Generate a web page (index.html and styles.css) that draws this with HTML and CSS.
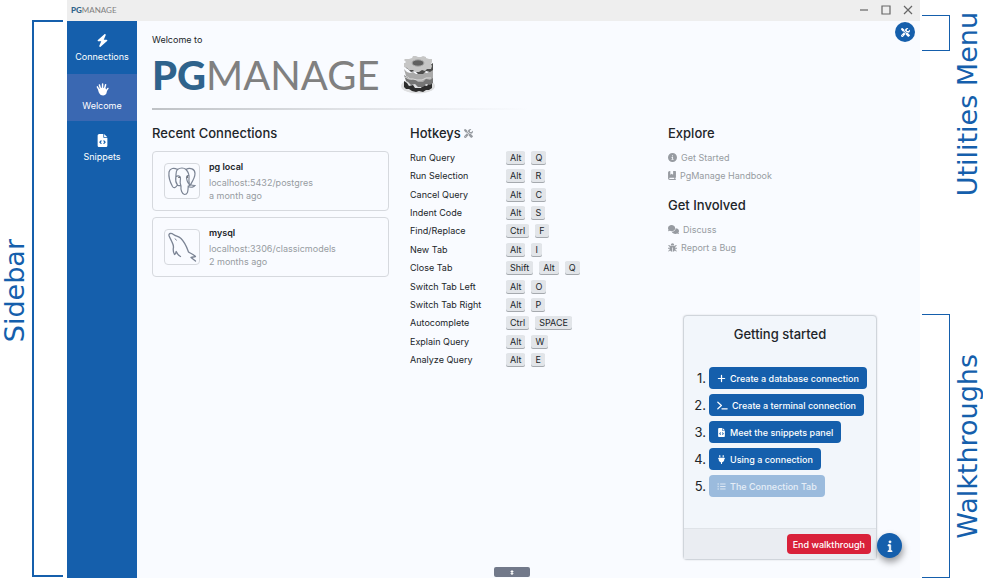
FILE: index.html
```html
<!DOCTYPE html>
<html lang="en">
<head>
<meta charset="utf-8">
<title>PgManage</title>
<link rel="stylesheet" href="styles.css">
</head>
<body>
<svg class="defs" aria-hidden="true">
  <symbol id="bolt" viewBox="0 0 448 512"><path d="M349.4 44.6c5.9-13.7 1.5-29.7-10.6-38.5s-28.6-8-39.9 1.8l-256 224c-10 8.8-13.6 22.9-8.9 35.3S50.7 288 64 288H175.5L98.6 467.4c-5.9 13.7-1.5 29.7 10.6 38.5s28.6 8 39.9-1.8l256-224c10-8.8 13.6-22.9 8.9-35.3s-16.6-20.7-30-20.7H272.5L349.4 44.6z"/></symbol>
  <symbol id="hand" viewBox="0 0 24 24"><path d="M6 13.500 L2.500 7 M8.500 11 L6.300 3.600 M12 10 L12.200 2 M15.500 11 L17.700 3.200 M18.500 15 L22 10" fill="none" stroke="currentColor" stroke-width="2.700" stroke-linecap="round"/><path d="M4.600 12 L10 8.600 L17 9 L19.800 13 C20.400 19 18 23 13.400 23 C9 23 7 21 4.600 16z"/></symbol>
  <symbol id="file" viewBox="0 0 384 512"><path d="M64 0C28.7 0 0 28.7 0 64V448c0 35.3 28.7 64 64 64H320c35.3 0 64-28.7 64-64V160H256c-17.7 0-32-14.3-32-32V0H64zM256 0V128H384L256 0zM153 289l-31 31 31 31c9.400 9.400 9.400 24.600 0 33.900s-24.600 9.400-33.900 0L71 337c-9.400-9.400-9.400-24.600 0-33.900l48-48c9.400-9.400 24.600-9.400 33.900 0s9.400 24.600 0 33.900zM265 255l48 48c9.400 9.400 9.400 24.600 0 33.900l-48 48c-9.400 9.400-24.600 9.400-33.900 0s-9.400-24.600 0-33.900l31-31-31-31c-9.400-9.400-9.400-24.600 0-33.900s24.600-9.400 33.900 0z"/></symbol>
  <symbol id="tools" viewBox="0 0 512 512"><path d="M78.6 5C69.100-2.400 55.600-1.500 47 7L7 47c-8.500 8.500-9.400 22-2.100 31.600l80 104c4.500 5.900 11.600 9.400 19 9.400h54.100l109 109c-14.700 29-10 65.400 14.300 89.600l112 112c12.500 12.500 32.800 12.500 45.300 0l64-64c12.500-12.500 12.500-32.800 0-45.300l-112-112c-24.200-24.200-60.600-29-89.600-14.300l-109-109V104c0-7.500-3.500-14.500-9.400-19L78.600 5zM19.900 396.100C7.200 408.800 0 426.100 0 444.100C0 481.600 30.400 512 67.900 512c18 0 35.300-7.200 48-19.900L233.700 374.300c-7.800-20.900-9-43.600-3.600-65.100l-61.700-61.700L19.900 396.100zM512 144c0-10.500-1.100-20.700-3.200-30.500c-2.400-11.200-16.100-14.100-24.200-6l-63.900 63.900c-3 3-7.100 4.700-11.300 4.700H352c-8.800 0-16-7.200-16-16V102.600c0-4.200 1.700-8.300 4.700-11.300l63.900-63.900c8.100-8.100 5.200-21.800-6-24.200C388.700 1.100 378.500 0 368 0C288.500 0 224 64.500 224 144l0 .8 85.300 85.300c36-9.100 75.800 .5 104 28.700L429 274.500c49-23 83-72.800 83-130.500zM56 432a24 24 0 1 1 48 0 24 24 0 1 1 -48 0z"/></symbol>
  <symbol id="circle-info" viewBox="0 0 512 512"><path d="M256 512A256 256 0 1 0 256 0a256 256 0 1 0 0 512zM216 336h24V272H216c-13.300 0-24-10.700-24-24s10.700-24 24-24h48c13.300 0 24 10.700 24 24v88h8c13.300 0 24 10.700 24 24s-10.700 24-24 24H216c-13.300 0-24-10.700-24-24s10.700-24 24-24zm40-208a32 32 0 1 1 0 64 32 32 0 1 1 0-64z"/></symbol>
  <symbol id="info" viewBox="0 0 192 512"><path d="M48 80a48 48 0 1 1 96 0A48 48 0 1 1 48 80zM0 224c0-17.700 14.300-32 32-32H96c17.700 0 32 14.300 32 32V448h32c17.700 0 32 14.300 32 32s-14.300 32-32 32H32c-17.700 0-32-14.300-32-32s14.300-32 32-32H64V256H32c-17.700 0-32-14.300-32-32z" stroke="currentColor" stroke-width="24"/></symbol>
  <symbol id="book" viewBox="0 0 448 512"><path d="M0 96C0 43 43 0 96 0h32V190.700c0 13.400 15.500 20.900 26 12.500L208 160l54 43.200c10.500 8.400 26 .9 26-12.500V0h128c17.700 0 32 14.300 32 32V352c0 17.700-14.300 32-32 32v64c17.700 0 32 14.300 32 32s-14.300 32-32 32H96c-53 0-96-43-96-96V96zM64 416c0 17.700 14.300 32 32 32H352V384H96c-17.700 0-32 14.300-32 32z"/></symbol>
  <symbol id="comments" viewBox="0 0 640 512"><path d="M208 352c114.900 0 208-78.800 208-176S322.900 0 208 0S0 78.800 0 176c0 38.600 14.700 74.300 39.600 103.400c-3.500 9.400-8.700 17.700-14.200 24.700c-10 13-25 22-25 31c0 9 7 17 16 17c26 0 66-10 91-26c30 17 64 26 101 26zM448 176c0 112-99 197-229 207c26 77 114 129 213 129c37 0 72-9 101-24c25 14 60 24 91 24c9 0 16-8 16-17c0-9-28-25-40-56c25-29 40-65 40-103c0-86-83-159-192-160z"/></symbol>
  <symbol id="bug" viewBox="0 0 512 512"><path d="M160 112a96 96 0 0 1 192 0v16H160zM144 160H368C398 180 410 215 410 270V340C410 430 345 490 276 500V250H236V500C167 490 102 430 102 340V270C102 215 114 180 144 160z"/><path d="M120 200L45 140M110 300H20M120 380L45 455M392 200L467 140M402 300H492M392 380L467 455" fill="none" stroke="currentColor" stroke-width="58" stroke-linecap="round"/></symbol>
  <symbol id="plus" viewBox="0 0 16 16"><path d="M8 2.500V13.500M2.500 8H13.500" fill="none" stroke="currentColor" stroke-width="2.200" stroke-linecap="round"/></symbol>
  <symbol id="terminal" viewBox="0 0 20 16"><path d="M1.500 2L8 8L1.500 14M9 14H18.500" fill="none" stroke="currentColor" stroke-width="2.200" stroke-linecap="round" stroke-linejoin="round"/></symbol>
  <symbol id="plug" viewBox="0 0 384 512"><path d="M96 0c18 0 32 14 32 32v96H64V32C64 14 78 0 96 0zM288 0c18 0 32 14 32 32v96h-64V32c0-18 14-32 32-32zM32 160H352c18 0 32 14 32 32s-14 32-32 32v32c0 77-55 142-128 157v67c0 18-14 32-32 32s-32-14-32-32v-67C87 398 32 333 32 256v-32c-18 0-32-14-32-32s14-32 32-32z"/></symbol>
  <symbol id="list" viewBox="0 0 20 16"><path d="M1.500 2.500H3.500M1.500 8H3.500M1.500 13.500H3.500" stroke="currentColor" stroke-width="3"/><path d="M7 2.500H19M7 8H19M7 13.500H19" stroke="currentColor" stroke-width="2"/></symbol>
</svg>

<div class="page">
  <aside class="notes-left">
    <span class="note">Sidebar</span>
    <span class="bracket bracket-left"></span>
  </aside>

  <div class="app">
    <header class="titlebar">
      <span class="brand brand-small"><b>PG</b>MANAGE</span>
      <div class="window-controls">
        <button type="button" aria-label="Minimize"><svg viewBox="0 0 10 10"><path d="M1 5H9"/></svg></button>
        <button type="button" aria-label="Maximize"><svg viewBox="0 0 10 10"><path d="M1 1H9V9H1z"/></svg></button>
        <button type="button" aria-label="Close"><svg viewBox="0 0 10 10"><path d="M1 1L9 9M9 1L1 9"/></svg></button>
      </div>
    </header>

    <div class="body">
      <nav class="sidebar">
        <a href="#connections"><svg class="icon"><use href="#bolt"/></svg>Connections</a>
        <a href="#welcome" class="active"><svg class="icon"><use href="#hand"/></svg>Welcome</a>
        <a href="#snippets"><svg class="icon"><use href="#file"/></svg>Snippets</a>
      </nav>

      <main class="content">
        <p class="welcome">Welcome to</p>
        <h1 class="hero">
          <span class="brand brand-large"><b>PG</b>MANAGE</span>
          <svg class="gears" viewBox="0 0 36 40" aria-hidden="true">
            <ellipse cx="18" cy="31" rx="17" ry="7.500" fill="#dedfe1"/>
            <path d="M4 26l3 2 2 3 4-1 2 3h6l2-3 4 1 2-3 3-2v7l-3 2-3 0-3 2-4-1-3 1-4-1-3-2-3 0-2-2z" fill="#2c2c2c"/>
            <path d="M4 20l3 2 3 2 3-1 3 2h5l3-2 3 1 3-3 3-1v8l-3 2-4-1-3 3h-5l-3-3-4 1-3-3-2-1z" fill="#757575"/>
            <path d="M4 14l3 3 3 1 3-1 3 2h5l3-2 3 1 3-2 3-2v9l-3 2-4-1-3 3h-5l-3-3-4 1-3-3-2-1z" fill="#a9a9a9"/>
            <path d="M4 8l3 3 3 1 3-1 3 2h5l3-2 3 1 3-2 3-2v7l-3 2-4-1-3 3h-5l-3-3-4 1-3-3-2-1z" fill="#4c4c4c"/>
            <path d="M5 4h4l3-1 1-2h3l2 1h3l2-1 3 1v1l3 1h3v3l-1 2 1 2-1 3-4 0-2 2-3-1-3 2h-4l-2-2-4 0-2-2-3-1v-3l2-2-2-2z" fill="#c6c6c6"/>
            <ellipse cx="18" cy="8" rx="6" ry="3.200" fill="#606060" stroke="#aaa"/>
            <path d="M5 22l4 2 4 0 4 1 5 0 4-2 5 0" fill="none" stroke="#dadada"/>
          </svg>
        </h1>
        <hr class="rule">

        <div class="columns">
          <section>
            <h2>Recent Connections</h2>
            <a class="card" href="#pg-local">
              <span class="card-icon"><svg viewBox="0 0 30 30" aria-hidden="true"><path d="M10.500 3.500C7 1.500 3 2 2 6C1.500 10 3 16 5.500 20.500C7 23 9 21 10.500 19M10.500 3.500C13 1.500 17 1.500 19 3.500M10.500 3.500C8.500 5 9.300 8 8.800 11C8.300 14 9 17 10.500 19C11.500 20.500 13 19 14 20M19 3.500C23 1 28 3 28 7.500C28 12 25 16 23 19.500M19 3.500C21.500 6 22.500 9 22 13C21.500 16 23 18 22 19.500M8.800 11C11 9 14 10 13.500 13C13 16 12.500 17 14 20C13.500 24 15 28 17.500 28.500C21 28.500 21 25 21.200 20.500C24 22 27 21 28 19.500C26 19.500 25 19.500 23 18.500C21 18 20 15 19.500 12C19.500 10 20.500 9 22 9.500" fill="none" stroke="currentColor" stroke-width="1.200" stroke-linecap="round"/><circle cx="12" cy="11.500" r=".6"/><circle cx="20.500" cy="11" r=".6"/></svg></span>
              <span class="card-text"><strong>pg local</strong><span>localhost:5432/postgres</span><span>a month ago</span></span>
            </a>
            <a class="card" href="#mysql">
              <span class="card-icon"><svg viewBox="0 0 30 30" aria-hidden="true"><path d="M28.500 29L24 25.500L28.500 24.500C26 22 23 21 21.500 20C20 16 18.500 11 14 6.500C11 4 9 4.500 6.500 2.500C4.500 1 1.500 1 2 3.500C2.500 5.500 3.500 6.500 4.500 9C5.500 11.500 6.500 12.500 6.500 15C6 17.500 6 20 7.500 22.500C8.500 22.500 8.800 20.500 9.200 19.500C10 21.500 11.500 23.500 13.500 24.500" fill="none" stroke="currentColor" stroke-width="1.300" stroke-linecap="round" stroke-linejoin="round"/><path d="M8 6.500L9.500 8.500" stroke="currentColor"/></svg></span>
              <span class="card-text"><strong>mysql</strong><span>localhost:3306/classicmodels</span><span>2 months ago</span></span>
            </a>
          </section>

          <section>
            <h2>Hotkeys <svg class="icon muted"><use href="#tools"/></svg></h2>
            <table class="hotkeys">
              <tr><th scope="row">Run Query</th><td><kbd>Alt</kbd><kbd>Q</kbd></td></tr>
              <tr><th scope="row">Run Selection</th><td><kbd>Alt</kbd><kbd>R</kbd></td></tr>
              <tr><th scope="row">Cancel Query</th><td><kbd>Alt</kbd><kbd>C</kbd></td></tr>
              <tr><th scope="row">Indent Code</th><td><kbd>Alt</kbd><kbd>S</kbd></td></tr>
              <tr><th scope="row">Find/Replace</th><td><kbd>Ctrl</kbd><kbd>F</kbd></td></tr>
              <tr><th scope="row">New Tab</th><td><kbd>Alt</kbd><kbd>I</kbd></td></tr>
              <tr><th scope="row">Close Tab</th><td><kbd>Shift</kbd><kbd>Alt</kbd><kbd>Q</kbd></td></tr>
              <tr><th scope="row">Switch Tab Left</th><td><kbd>Alt</kbd><kbd>O</kbd></td></tr>
              <tr><th scope="row">Switch Tab Right</th><td><kbd>Alt</kbd><kbd>P</kbd></td></tr>
              <tr><th scope="row">Autocomplete</th><td><kbd>Ctrl</kbd><kbd>SPACE</kbd></td></tr>
              <tr><th scope="row">Explain Query</th><td><kbd>Alt</kbd><kbd>W</kbd></td></tr>
              <tr><th scope="row">Analyze Query</th><td><kbd>Alt</kbd><kbd>E</kbd></td></tr>
            </table>
          </section>

          <section>
            <h2>Explore</h2>
            <ul class="links">
              <li><a href="#start"><svg class="icon"><use href="#circle-info"/></svg>Get Started</a></li>
              <li><a href="#handbook"><svg class="icon narrow"><use href="#book"/></svg>PgManage Handbook</a></li>
            </ul>
            <h2>Get Involved</h2>
            <ul class="links">
              <li><a href="#discuss"><svg class="icon wide"><use href="#comments"/></svg>Discuss</a></li>
              <li><a href="#bug-report"><svg class="icon"><use href="#bug"/></svg>Report a Bug</a></li>
            </ul>
          </section>
        </div>
      </main>
    </div>

    <button type="button" class="round utilities" aria-label="Utilities"><svg class="icon"><use href="#tools"/></svg></button>

    <section class="walkthrough">
      <h2>Getting started</h2>
      <ol>
        <li><button type="button"><svg class="icon"><use href="#plus"/></svg>Create a database connection</button></li>
        <li><button type="button"><svg class="icon wide"><use href="#terminal"/></svg>Create a terminal connection</button></li>
        <li><button type="button"><svg class="icon"><use href="#file"/></svg>Meet the snippets panel</button></li>
        <li><button type="button"><svg class="icon"><use href="#plug"/></svg>Using a connection</button></li>
        <li><button type="button" disabled><svg class="icon"><use href="#list"/></svg>The Connection Tab</button></li>
      </ol>
      <footer><button type="button" class="end">End walkthrough</button></footer>
    </section>
    <button type="button" class="round help" aria-label="Walkthroughs"><svg class="icon"><use href="#info"/></svg></button>

    <button type="button" class="drawer" aria-label="Expand panel"><svg viewBox="0 0 6 8"><path d="M3 0L6 3H4V5H6L3 8L0 5H2V3H0z"/></svg></button>
  </div>

  <aside class="notes-right">
    <div class="note-group">
      <span class="bracket bracket-right bracket-short"></span>
      <span class="note">Utilities Menu</span>
    </div>
    <div class="note-group note-group-tall">
      <span class="bracket bracket-right"></span>
      <span class="note">Walkthroughs</span>
    </div>
  </aside>
</div>
</body>
</html>
```
FILE: styles.css
```css
:root {
  --blue: #155fac;
  --ink: #212529;
  --muted: #979ba1;
  --line: #d6d9de;
}

* { box-sizing: border-box; }

body {
  margin: 0;
  background: #fff;
  color: var(--ink);
  font: 9px/13px Inter, "Open Sans", sans-serif;
}

h1, h2, p, ul, ol { margin: 0; padding: 0; }
ul, ol { list-style: none; }
a { color: inherit; text-decoration: none; }
button { border: 0; padding: 0; font: inherit; color: inherit; background: none; }
.defs { position: absolute; width: 0; height: 0; }
.icon { width: 9px; height: 9px; flex: none; fill: currentColor; }
.icon.wide { width: 11px; }
.icon.narrow { width: 8px; }

.page {
  display: grid;
  grid-template-columns: 67px 1fr 63px;
  min-height: 100vh;
}

/* Annotations beside the window */
.note {
  writing-mode: vertical-rl;
  transform: rotate(180deg);
  color: var(--blue);
  font: 27px/30px "DejaVu Sans", sans-serif;
  white-space: nowrap;
}
.bracket { border: 1px solid var(--blue); }
.bracket-left { border-width: 2px; border-right: 0; width: 31px; align-self: stretch; margin-top: 16px; }
.bracket-right { border-left: 0; width: 28px; align-self: stretch; }
.bracket-short { height: 36px; margin-top: 3px; align-self: flex-start; }
.notes-left { display: flex; align-items: center; gap: 2px; padding: 4px 0 1px; }
.notes-right { display: flex; flex-direction: column; justify-content: space-between; padding: 12px 0 0 2px; }
.note-group { display: flex; align-items: center; gap: 3px; }
.note-group-tall { height: 264px; }

/* Application window */
.app {
  position: relative;
  display: flex;
  flex-direction: column;
  background: #f9fbff;
}
.titlebar {
  display: flex;
  align-items: center;
  justify-content: space-between;
  height: 21px;
  padding: 0 7px 2px 4px;
  background: #eee;
}
.brand { font-family: Lato, sans-serif; font-weight: 400; color: #808080; }
.brand b { font-weight: 900; color: #2f638c; }
.brand-small { font-size: 8px; line-height: 12px; }
.brand-large { font-size: 40px; line-height: 48px; }
.window-controls { display: flex; gap: 12px; }
.window-controls button { display: flex; }
.window-controls svg { width: 10px; height: 10px; fill: none; stroke: #666; stroke-width: 1.2; }

.body { display: flex; flex: 1; }
.sidebar { width: 70px; background: var(--blue); color: #fff; }
.sidebar a {
  display: flex;
  flex-direction: column;
  align-items: center;
  gap: 3px;
  padding: 13px 0 11px;
}
.sidebar .active { padding: 9px 0; background: #3a68b2; }
.sidebar .icon { width: 13px; height: 13px; }

.content { flex: 1; padding: 12px 15px 0; }
.welcome { line-height: 14px; }
.hero { display: flex; align-items: center; gap: 21px; height: 56px; }
.gears { width: 36px; height: 40px; }
.rule { height: 2px; margin: 5px 0 14px; border: 0; background: linear-gradient(to right, #bfc2c6, #dfe1e5 25%, transparent 50%); }
.columns { display: grid; grid-template-columns: repeat(3, 1fr); gap: 21px; }
h2 { font-size: 13px; font-weight: 500; line-height: 18px; }
.muted { color: var(--muted); }

.card {
  display: flex;
  align-items: center;
  gap: 9px;
  height: 60px;
  margin-top: 6px;
  padding: 0 11px;
  border: 1px solid var(--line);
  border-radius: 4px;
}
h2 + .card { margin-top: 9px; }
.card-icon { display: grid; place-items: center; width: 36px; height: 36px; border: 1px solid var(--line); border-radius: 4px; color: #7b8494; }
.card-icon svg { width: 30px; height: 30px; }
.card-text { display: flex; flex-direction: column; color: var(--muted); }
.card-text strong { margin-bottom: 3px; color: var(--ink); font-weight: 600; }

.hotkeys { height: 221px; margin-top: 6px; border-collapse: collapse; }
.hotkeys th { width: 96px; padding: 0; font-weight: 400; text-align: left; }
.hotkeys td { padding: 0; }
kbd {
  display: inline-block;
  margin-right: 6px;
  padding: 0 4px;
  border-radius: 2px;
  background: #e2e5e9;
  box-shadow: 0 1px 0 #a5a9ae;
  font: inherit;
}

.links { margin: 6px 0 12px; }
.links a { display: flex; align-items: center; gap: 4px; height: 18px; color: var(--muted); }

/* Controls floating over the window */
.round { position: absolute; display: grid; place-items: center; border-radius: 50%; background: var(--blue); color: #fff; }
.utilities { top: 22px; right: 5px; width: 20px; height: 20px; }
.help { right: 18px; bottom: 20px; width: 25px; height: 25px; box-shadow: 1px 4px 7px #0006; }
.help .icon { width: 12px; height: 12px; }
.drawer { position: absolute; left: 50%; bottom: 1px; display: grid; place-items: center; width: 36px; height: 10px; border-radius: 2px; background: #72798a; }
.drawer svg { width: 4px; height: 5px; fill: #fff; }

.walkthrough {
  position: absolute;
  right: 43px;
  bottom: 18px;
  width: 194px;
  border: 1px solid #d0d5db;
  border-radius: 4px;
  background: #f2f6fb;
  box-shadow: 0 0 2px #0002;
}
.walkthrough h2 { padding: 9px 0 24px; text-align: center; }
.walkthrough ol { display: grid; gap: 5px; padding-bottom: 31px; counter-reset: step; }
.walkthrough li { display: flex; align-items: center; gap: 3px; counter-increment: step; }
.walkthrough li::before { content: counter(step) "."; width: 22px; font-size: 13px; line-height: 18px; text-align: right; }
.walkthrough li button {
  display: flex;
  align-items: center;
  gap: 4px;
  height: 22px;
  padding: 0 8px;
  border-radius: 4px;
  background: var(--blue);
  color: #fff;
  font-weight: 500;
  white-space: nowrap;
}
.walkthrough li button:disabled { background: #9bbbdd; color: #e6eef7; }
.walkthrough footer { display: flex; justify-content: flex-end; padding: 5px; border-top: 1px solid #dfe3e8; background: #eaedf2; }
.walkthrough .end { height: 20px; padding: 0 6px; border-radius: 4px; background: #d9213a; color: #fff; font-weight: 500; }
```
